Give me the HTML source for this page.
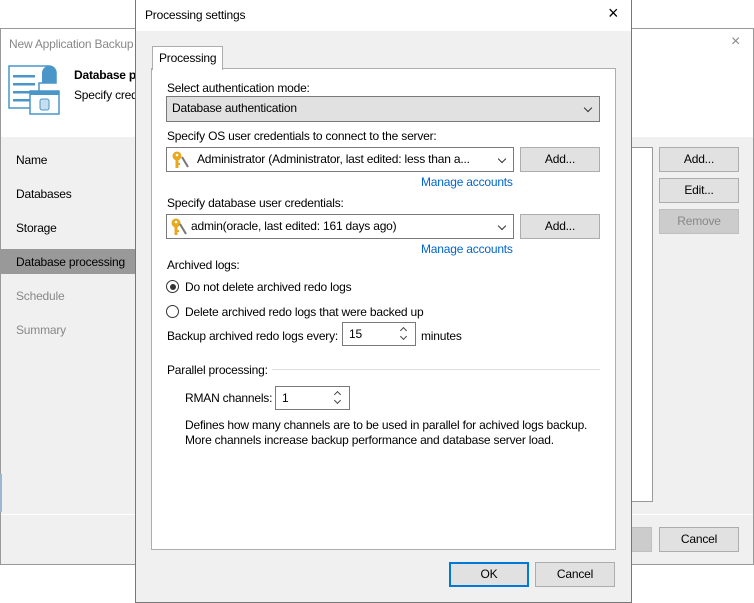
<!DOCTYPE html>
<html><head><meta charset="utf-8"><style>
*{box-sizing:border-box;margin:0;padding:0}
body{width:754px;height:603px;background:#fff;position:relative;overflow:hidden;font-family:"Liberation Sans",sans-serif;font-size:12px;color:#000;letter-spacing:-0.2px}
.a{position:absolute;white-space:nowrap}
.btn{position:absolute;background:#e1e1e1;border:1px solid #adadad;text-align:center;line-height:23px}
.combo{position:absolute;background:#fff;border:1px solid #7a7a7a;line-height:23px}
.link{color:#0066cc}
.chev{position:absolute;right:8px;top:8px;width:6px;height:6px;border-right:1.3px solid #333;border-bottom:1.3px solid #333;transform:rotate(45deg)}
.spin{position:absolute;background:#fff;border:1px solid #7a7a7a;line-height:22px;padding-left:6px}
.up,.dn{position:absolute;right:9px;width:5px;height:5px;border-left:1.2px solid #444;border-top:1.2px solid #444}
.up{top:5px;transform:rotate(45deg)}
.dn{top:11px;transform:rotate(225deg)}
</style></head><body>
<!-- background window -->
<div class="a" style="left:0;top:28px;width:754px;height:537px;border:1px solid #999;background:#f0f0f0"></div>
<div class="a" style="left:1px;top:29px;width:752px;height:108px;background:#fff"></div>
<div class="a" style="left:9px;top:37px;color:#888;font-size:12px">New Application Backup</div>
<div class="a" style="left:731px;top:33px;color:#888;font-size:16px">×</div>
<svg class="a" style="left:7px;top:64px" width="54" height="52" viewBox="0 0 54 52">
<path d="M2 2 H42 a7 7 0 0 1 7 7 V19 H32 V44 H2 Z" fill="#fff" stroke="#4a96c8" stroke-width="1.5"/>
<path d="M42 2 a7 7 0 0 1 7 7 V19 H35 V9 a7 7 0 0 1 7 -7Z" fill="#4a96c8"/>
<rect x="6" y="11" width="22" height="2.5" fill="#4a96c8"/><rect x="6" y="19" width="22" height="2.5" fill="#4a96c8"/><rect x="6" y="27" width="22" height="2.5" fill="#4a96c8"/><rect x="6" y="35" width="22" height="2.5" fill="#4a96c8"/>
<rect x="23" y="27" width="29" height="23" fill="#fff" stroke="#4a96c8" stroke-width="1.5"/>
<rect x="23" y="27" width="29" height="4" fill="#4a96c8"/>
<rect x="33" y="35" width="9" height="11" rx="2" fill="#c5dff0" stroke="#4a96c8"/>
</svg>
<div class="a" style="left:74px;top:68px;font-weight:bold">Database processing</div>
<div class="a" style="left:74px;top:88px">Specify credentials</div>
<div class="a" style="left:16px;top:153px">Name</div>
<div class="a" style="left:16px;top:187px">Databases</div>
<div class="a" style="left:16px;top:221px">Storage</div>
<div class="a" style="left:1px;top:249px;width:134px;height:25px;background:#999"></div>
<div class="a" style="left:16px;top:255px">Database processing</div>
<div class="a" style="left:16px;top:289px;color:#888">Schedule</div>
<div class="a" style="left:16px;top:323px;color:#888">Summary</div>
<div class="a" style="left:0;top:474px;width:2px;height:38px;background:#9ab8d4"></div>
<div class="a" style="left:1px;top:514px;width:752px;height:1px;background:#fff"></div>
<div class="a" style="left:600px;top:147px;width:53px;height:355px;background:#fff;border:1px solid #999"></div>
<div class="btn" style="left:659px;top:147px;width:80px;height:25px">Add...</div>
<div class="btn" style="left:659px;top:178px;width:80px;height:25px">Edit...</div>
<div class="btn" style="left:659px;top:209px;width:80px;height:25px;background:#ccc;border-color:#bfbfbf;color:#888">Remove</div>
<div class="btn" style="left:600px;top:527px;width:52px;height:25px;background:#ccc;border-color:#bfbfbf"></div>
<div class="btn" style="left:659px;top:527px;width:80px;height:25px">Cancel</div>

<!-- foreground dialog -->
<div class="a" style="left:135px;top:-1px;width:497px;height:604px;border:1px solid #777;background:#f0f0f0"></div>
<div class="a" style="left:136px;top:0;width:495px;height:31px;background:#fff"></div>
<div class="a" style="left:145px;top:8px">Processing settings</div>
<div class="a" style="left:608px;top:3px;font-size:18px">×</div>
<div class="a" style="left:151px;top:68px;width:465px;height:482px;background:#fff;border:1px solid #adadad"></div>
<div class="a" style="left:152px;top:46px;width:71px;height:24px;background:#fff;border:1px solid #adadad;border-bottom:none"></div>
<div class="a" style="left:159px;top:51px">Processing</div>

<div class="a" style="left:167px;top:81px">Select authentication mode:</div>
<div class="combo" style="left:166px;top:96px;width:434px;height:26px;background:#e1e1e1;padding-left:5px">Database authentication<div class="chev"></div></div>
<div class="a" style="left:167px;top:129px">Specify OS user credentials to connect to the server:</div>
<div class="combo" style="left:166px;top:147px;width:348px;height:25px;padding-left:30px">Administrator (Administrator, last edited: less than a...<div class="chev"></div></div>
<div class="btn" style="left:520px;top:147px;width:80px;height:25px">Add...</div>
<div class="a link" style="left:421px;top:175px">Manage accounts</div>
<div class="a" style="left:167px;top:196px">Specify database user credentials:</div>
<div class="combo" style="left:166px;top:214px;width:348px;height:25px;padding-left:24px">admin(oracle, last edited: 161 days ago)<div class="chev"></div></div>
<div class="btn" style="left:520px;top:214px;width:80px;height:25px">Add...</div>
<div class="a link" style="left:421px;top:242px">Manage accounts</div>
<svg class="a" style="left:171px;top:150px" width="20" height="20" viewBox="0 0 20 20"><circle cx="6" cy="6" r="4.5" fill="#e8a820"/><circle cx="6" cy="5" r="1.3" fill="#fff"/><rect x="4.5" y="9" width="3" height="9" fill="#e8a820"/><rect x="7" y="13" width="2" height="2" fill="#e8a820"/><path d="M11 7 l6 10" stroke="#777" stroke-width="2"/></svg>
<svg class="a" style="left:170px;top:217px" width="20" height="20" viewBox="0 0 20 20"><circle cx="6" cy="6" r="4.5" fill="#e8a820"/><circle cx="6" cy="5" r="1.3" fill="#fff"/><rect x="4.5" y="9" width="3" height="9" fill="#e8a820"/><rect x="7" y="13" width="2" height="2" fill="#e8a820"/><path d="M10 7 l6 10" stroke="#777" stroke-width="2"/></svg>

<div class="a" style="left:167px;top:258px">Archived logs:</div>
<div class="a" style="left:166px;top:280px;width:13px;height:13px;border:1px solid #333;border-radius:50%;background:#fff"></div>
<div class="a" style="left:169.5px;top:283.5px;width:6px;height:6px;border-radius:50%;background:#333"></div>
<div class="a" style="left:185px;top:280px">Do not delete archived redo logs</div>
<div class="a" style="left:166px;top:305px;width:13px;height:13px;border:1px solid #333;border-radius:50%;background:#fff"></div>
<div class="a" style="left:185px;top:305px">Delete archived redo logs that were backed up</div>
<div class="a" style="left:167px;top:329px">Backup archived redo logs every:</div>
<div class="spin" style="left:342px;top:322px;width:74px;height:24px">15<div class="up"></div><div class="dn"></div></div>
<div class="a" style="left:421px;top:329px">minutes</div>
<div class="a" style="left:167px;top:363px">Parallel processing:</div>
<div class="a" style="left:272px;top:369px;width:328px;height:1px;background:#ddd"></div>
<div class="a" style="left:185px;top:391px">RMAN channels:</div>
<div class="spin" style="left:275px;top:386px;width:75px;height:24px">1<div class="up"></div><div class="dn"></div></div>
<div class="a" style="left:185px;top:418px">Defines how many channels are to be used in parallel for achived logs backup.</div>
<div class="a" style="left:185px;top:433px">More channels increase backup performance and database server load.</div>

<div class="btn" style="left:449px;top:562px;width:80px;height:25px;border:2px solid #0078d7;line-height:21px">OK</div>
<div class="btn" style="left:535px;top:562px;width:80px;height:25px">Cancel</div>
</body></html>
